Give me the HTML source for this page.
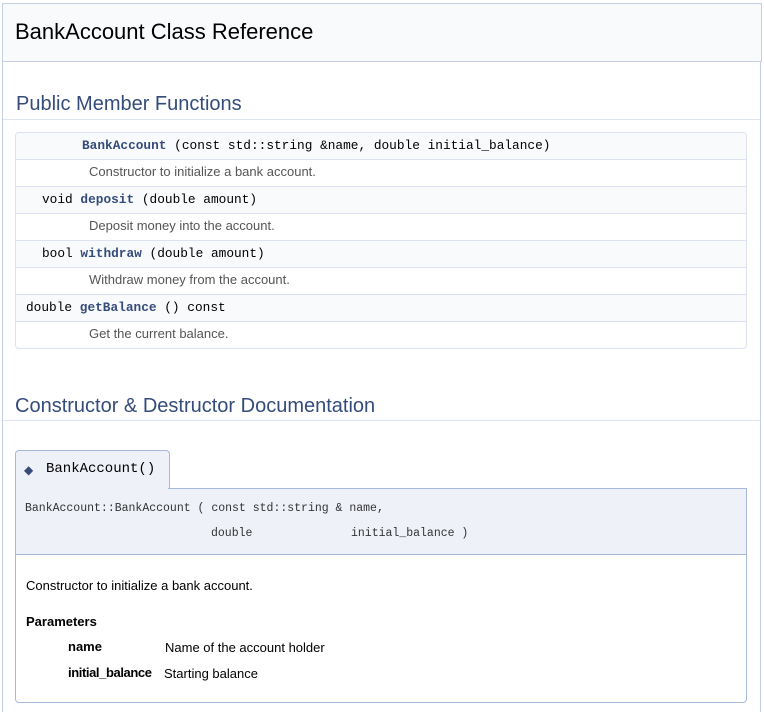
<!DOCTYPE html>
<html><head><meta charset="utf-8"><style>
body{margin:0;width:764px;height:712px;background:#fff;font-family:"Liberation Sans",sans-serif;position:relative;overflow:hidden}
.a{position:absolute;white-space:nowrap}
.m{font-family:"Liberation Mono",monospace}
</style></head><body>
<div class="a" style="left:2px;top:3px;width:758px;height:58px;background:#f9fafc;border:1px solid #c4cfe5;border-bottom:none"></div>
<div class="a" style="left:2px;top:61px;width:759px;height:1px;background:#c4cfe5"></div>
<div class="a" style="left:2px;top:61px;width:1px;height:651px;background:#c4cfe5"></div>
<div class="a" style="left:760px;top:61px;width:1px;height:651px;background:#c4cfe5"></div>
<div class="a" style="left:15px;top:19px;font-size:22px;color:#000">BankAccount Class Reference</div>
<div class="a" style="left:16px;top:93px;font-size:20px;color:#354c7b">Public Member Functions</div>
<div class="a" style="left:3px;top:119px;width:757px;height:1px;background:#dde3ef"></div>
<div class="a" style="left:15px;top:132px;width:730px;height:215px;border:1px solid #dce2ef;border-radius:4px;overflow:hidden">
 <div style="height:26px;background:#f9fafc;border-bottom:1px solid #dce2ef"></div>
 <div style="height:26px;border-bottom:1px solid #dce2ef"></div>
 <div style="height:26px;background:#f9fafc;border-bottom:1px solid #dce2ef"></div>
 <div style="height:26px;border-bottom:1px solid #dce2ef"></div>
 <div style="height:26px;background:#f9fafc;border-bottom:1px solid #dce2ef"></div>
 <div style="height:26px;border-bottom:1px solid #dce2ef"></div>
 <div style="height:26px;background:#f9fafc;border-bottom:1px solid #dce2ef"></div>
</div>
<div class="a m" style="left:82px;top:138px;font-size:12.8px"><b style="color:#354c7b">BankAccount</b> (const std::string &amp;name, double initial_balance)</div>
<div class="a" style="left:89px;top:164px;font-size:13px;color:#555">Constructor to initialize a bank account.</div>
<div class="a m" style="left:42px;top:192px;font-size:12.8px">void <b style="color:#354c7b">deposit</b> (double amount)</div>
<div class="a" style="left:89px;top:218px;font-size:13px;color:#555">Deposit money into the account.</div>
<div class="a m" style="left:42px;top:246px;font-size:12.8px">bool <b style="color:#354c7b">withdraw</b> (double amount)</div>
<div class="a" style="left:89px;top:272px;font-size:13px;color:#555">Withdraw money from the account.</div>
<div class="a m" style="left:26px;top:300px;font-size:12.8px">double <b style="color:#354c7b">getBalance</b> () const</div>
<div class="a" style="left:89px;top:326px;font-size:13px;color:#555">Get the current balance.</div>
<div class="a" style="left:15px;top:395px;font-size:20px;color:#354c7b">Constructor &amp; Destructor Documentation</div>
<div class="a" style="left:3px;top:420px;width:757px;height:1px;background:#dde3ef"></div>
<div class="a" style="left:15px;top:450px;width:153px;height:40px;background:#eef1f7;border:1px solid #a8b8d9;border-bottom:none;border-radius:4px 4px 0 0"></div>
<div class="a" style="left:15px;top:488px;width:730px;height:65px;background:#eef1f7;border:1px solid #a8b8d9"></div>
<div class="a" style="left:16px;top:487px;width:152px;height:3px;background:#eef1f7"></div>
<div class="a" style="left:24px;top:463px;font-size:12px;color:#354c7b">◆</div>
<div class="a m" style="left:46px;top:461px;font-size:14px">BankAccount()</div>
<div class="a m" style="left:25px;top:502px;font-size:11.5px;color:#333">BankAccount::BankAccount ( const std::string &amp; name,</div>
<div class="a m" style="left:211px;top:527px;font-size:11.5px;color:#333">double</div>
<div class="a m" style="left:351px;top:527px;font-size:11.5px;color:#333">initial_balance )</div>
<div class="a" style="left:15px;top:554px;width:730px;height:148px;border:1px solid #a8b8d9;border-top:none;border-radius:0 0 4px 4px"></div>
<div class="a" style="left:26px;top:578px;font-size:13px">Constructor to initialize a bank account.</div>
<div class="a" style="left:26px;top:614px;font-size:13px;font-weight:bold">Parameters</div>
<div class="a" style="left:68px;top:639px;font-size:13px;font-weight:bold">name</div>
<div class="a" style="left:165px;top:640px;font-size:13px">Name of the account holder</div>
<div class="a" style="left:68px;top:665px;font-size:13px;font-weight:bold;letter-spacing:-0.4px">initial_balance</div>
<div class="a" style="left:164px;top:666px;font-size:13px">Starting balance</div>
</body></html>
